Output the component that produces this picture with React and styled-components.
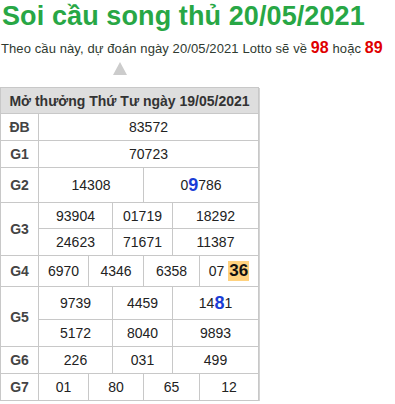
import React from "react";
import styled, { createGlobalStyle } from "styled-components";

const Global = createGlobalStyle`
  html, body { margin: 0; padding: 0; background: #fff; }
  body { font-family: "Liberation Sans", Arial, sans-serif; color: #333; }
`;

const Page = styled.div`
  display: flex;
  flex-direction: column;
  align-items: flex-start;
`;

const Title = styled.h1`
  margin: 1px 0 0 2px;
  font-size: 27px;
  line-height: 31px;
  font-weight: bold;
  letter-spacing: 0.1px;
  color: #28a745;
`;

const Subtitle = styled.p`
  margin: 6px 0 0 1px;
  font-size: 13px;
  line-height: 20px;
  letter-spacing: 0.1px;
  color: #2f3a30;
`;

const Lotto = styled.b`
  font-size: 16px;
  line-height: 20px;
  color: #e00000;
`;

const Pointer = styled.div`
  margin: 3px 0 0 113px;
  width: 0;
  height: 0;
  border-left: 7px solid transparent;
  border-right: 7px solid transparent;
  border-bottom: 13px solid #cccccc;
`;

const Board = styled.div`
  margin-top: 12px;
  display: grid;
  grid-template-columns: 38px 50px 24px 31px 29px 27px 59px;
  grid-template-rows: 26px 27px 27px 35px 26px 27px 31px 33px 27px 27px 27px;
  border-top: 1px solid #c8c8c8;
  border-left: 1px solid #c8c8c8;
  box-shadow: 1px 1px 0 #d4d4d4;
`;

const Cell = styled.div`
  grid-column: span ${(p) => p.$span || 1};
  grid-row: span ${(p) => p.$rows || 1};
  display: flex;
  align-items: center;
  justify-content: center;
  border-right: 1px solid #c8c8c8;
  border-bottom: 1px solid #c8c8c8;
  font-size: 14px;
  color: #222;
  white-space: nowrap;
`;

const Header = styled(Cell)`
  grid-column: 1 / -1;
  background: #dedede;
  font-weight: bold;
  color: #333;
`;

const Label = styled(Cell)`
  font-weight: bold;
  color: #444;
`;

const Big = styled.b`
  font-size: 18px;
  line-height: 18px;
  color: #1a3dd6;
`;

const Hit = styled.b`
  margin-left: 4px;
  padding: 0 1px;
  font-size: 17px;
  line-height: 20px;
  color: #111;
  background: #ffd27f;
`;

const rows = [
  ["ĐB", [["83572", 6]]],
  ["G1", [["70723", 6]]],
  ["G2", [["14308", 3], [<>0<Big>9</Big>786</>, 3]]],
];

export default function App() {
  return (
    <Page>
      <Global />
      <Title>Soi cầu song thủ 20/05/2021</Title>
      <Subtitle>
        Theo cầu này, dự đoán ngày 20/05/2021 Lotto sẽ về <Lotto>98</Lotto> hoặc <Lotto>89</Lotto>
      </Subtitle>
      <Pointer />
      <Board>
        <Header>Mở thưởng Thứ Tư ngày 19/05/2021</Header>
        {rows.map(([label, cells]) => (
          <React.Fragment key={label}>
            <Label>{label}</Label>
            {cells.map(([v, s], i) => (
              <Cell key={i} $span={s}>{v}</Cell>
            ))}
          </React.Fragment>
        ))}
        <Label $rows={2}>G3</Label>
        <Cell $span={2}>93904</Cell>
        <Cell $span={2}>01719</Cell>
        <Cell $span={2}>18292</Cell>
        <Cell $span={2}>24623</Cell>
        <Cell $span={2}>71671</Cell>
        <Cell $span={2}>11387</Cell>
        <Label>G4</Label>
        <Cell>6970</Cell>
        <Cell $span={2}>4346</Cell>
        <Cell $span={2}>6358</Cell>
        <Cell>07<Hit>36</Hit></Cell>
        <Label $rows={2}>G5</Label>
        <Cell $span={2}>9739</Cell>
        <Cell $span={2}>4459</Cell>
        <Cell $span={2}>14<Big>8</Big>1</Cell>
        <Cell $span={2}>5172</Cell>
        <Cell $span={2}>8040</Cell>
        <Cell $span={2}>9893</Cell>
        <Label>G6</Label>
        <Cell $span={2}>226</Cell>
        <Cell $span={2}>031</Cell>
        <Cell $span={2}>499</Cell>
        <Label>G7</Label>
        <Cell>01</Cell>
        <Cell $span={2}>80</Cell>
        <Cell $span={2}>65</Cell>
        <Cell>12</Cell>
      </Board>
    </Page>
  );
}
